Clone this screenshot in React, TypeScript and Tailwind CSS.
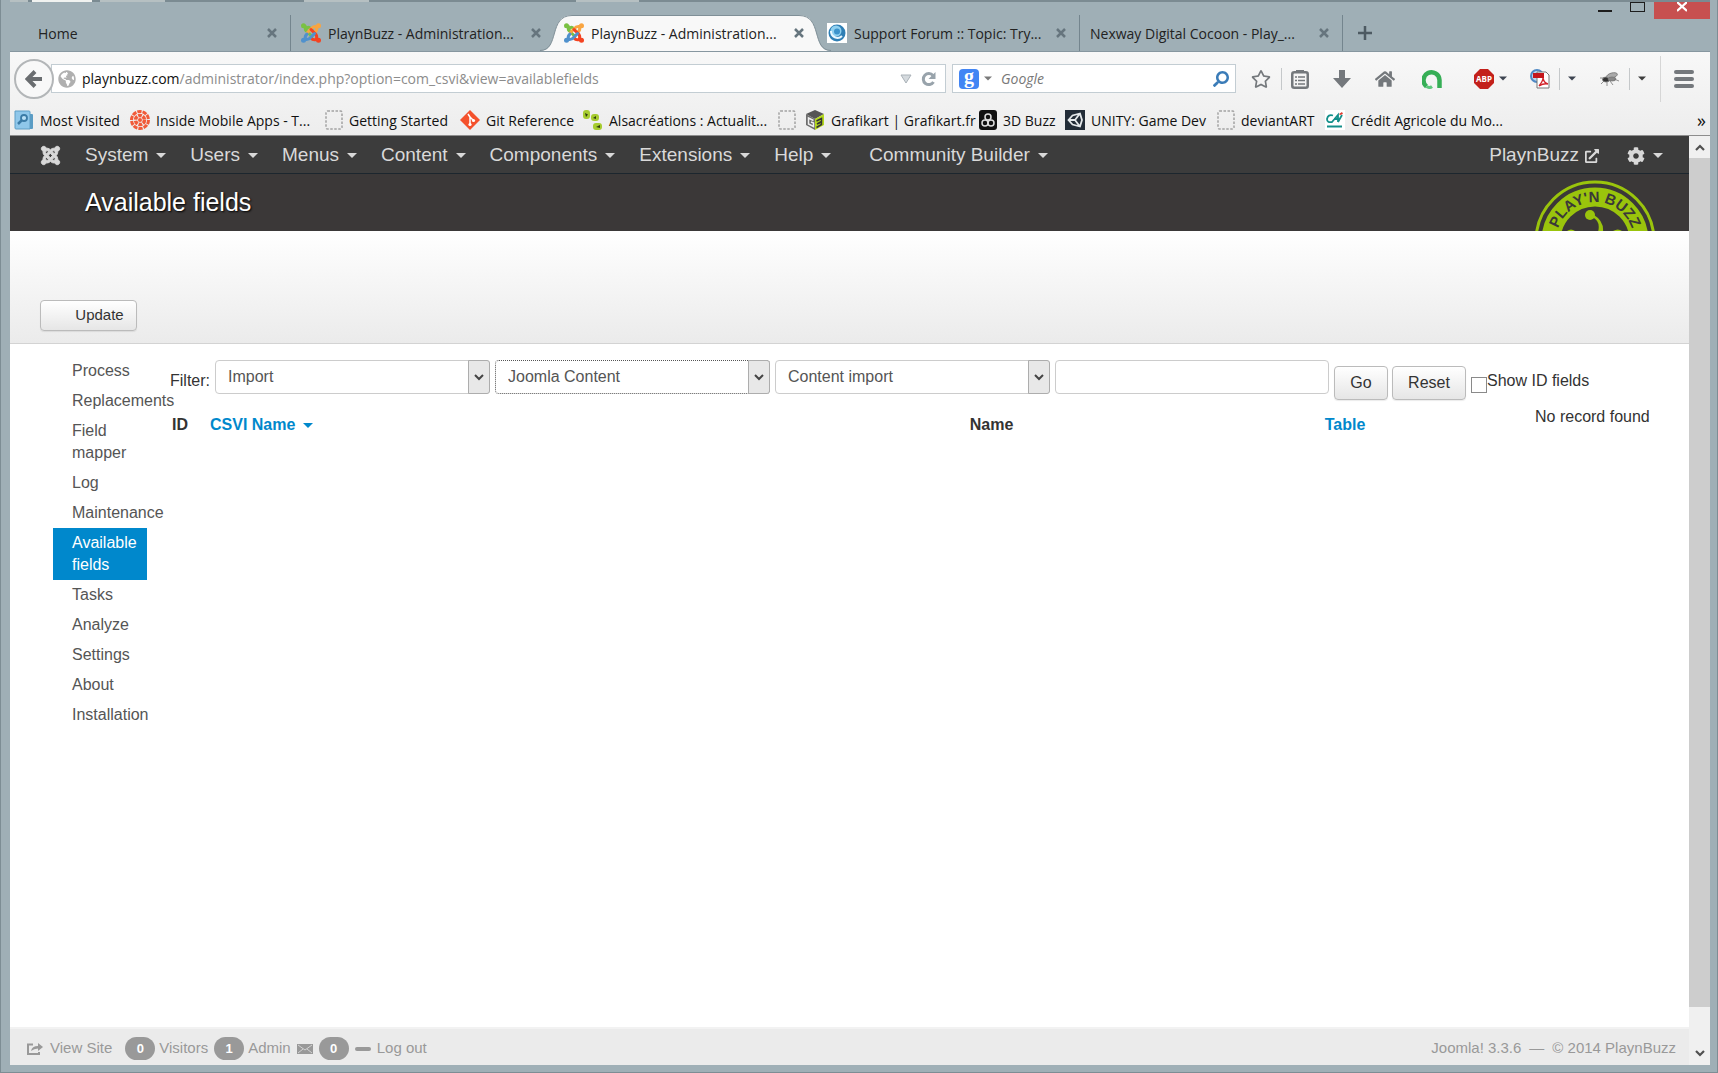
import { useState } from "react";
import { FaJoomla, FaArrowLeft, FaHome, FaGlobeAmericas, FaRegStar, FaSearch, FaExternalLinkAlt, FaCog } from "react-icons/fa";

const menuItems = ["System", "Users", "Menus", "Content", "Components", "Extensions", "Help"];

const sidebarItems = [
  "Process",
  "Replacements",
  "Field mapper",
  "Log",
  "Maintenance",
  "Available fields",
  "Tasks",
  "Analyze",
  "Settings",
  "About",
  "Installation",
];

const bookmarks = [
  { icon: "visited", label: "Most Visited", width: "w-[116px]" },
  { icon: "balls", label: "Inside Mobile Apps - T...", width: "w-[195px]" },
  { icon: "blank", label: "Getting Started", width: "w-[135px]" },
  { icon: "git", label: "Git Reference", width: "w-[123px]" },
  { icon: "leaf", label: "Alsacréations : Actualit...", width: "w-[195px]" },
  { icon: "blank", label: "", width: "w-[27px]" },
  { icon: "cube", label: "Grafikart | Grafikart.fr", width: "w-[174px]" },
  { icon: "buzz", label: "3D Buzz", width: "w-[86px]" },
  { icon: "unity", label: "UNITY: Game Dev", width: "w-[152px]" },
  { icon: "blank", label: "deviantART", width: "w-[108px]" },
  { icon: "credit", label: "Crédit Agricole du Mo...", width: "w-[200px]" },
];

function Caret({ className = "w-[10px]" }: { className?: string }) {
  return (
    <svg viewBox="0 0 10 5" className={`h-[5px] shrink-0 fill-current ${className}`}>
      <path d="M0 0h10L5 5z" />
    </svg>
  );
}

function JoomlaIcon() {
  return (
    <svg viewBox="0 0 20 20" className="size-5 shrink-0" fill="none" strokeWidth="3" strokeLinecap="round" strokeLinejoin="round">
      <path d="M2.5 3l2 .5Q3.5 7 6 8.500l5 5" stroke="#7ac143" />
      <path d="M5 7q1-4 4-2l2 2" stroke="#7ac143" />
      <path d="M17.500 3l-2 .5Q12 3 10.500 5.500l-4 4" stroke="#f9a541" />
      <path d="M15.500 4q1 3-1.500 5" stroke="#f9a541" />
      <path d="M17.500 17l-2-.5q1-4-1.500-6L10 6.500" stroke="#f44321" />
      <path d="M15 16.500q-3 1-5-1.500" stroke="#f44321" />
      <path d="M2.500 17l2-.5Q8 17 9.500 14.500l4-4" stroke="#5091cd" />
      <path d="M4.500 16q-1-3 1.500-5" stroke="#5091cd" />
      <g stroke="none">
        <circle cx="2.500" cy="2.800" r="2.500" fill="#7ac143" />
        <circle cx="17.500" cy="2.800" r="2.500" fill="#f9a541" />
        <circle cx="17.500" cy="17.200" r="2.500" fill="#f44321" />
        <circle cx="2.500" cy="17.200" r="2.500" fill="#5091cd" />
      </g>
    </svg>
  );
}

function ForumIcon() {
  return (
    <svg viewBox="0 0 20 20" className="size-5 shrink-0">
      <path fill="#fff" d="M0 0h20v20H0z" />
      <circle cx="10" cy="10" r="8.500" fill="#2f7fb5" />
      <circle cx="9" cy="8" r="5.500" fill="#8fd0f0" />
      <path d="M4 8a6.500 6.500 0 0 0 11 5" stroke="#e8f7ff" strokeWidth="2" fill="none" />
      <circle cx="10" cy="8.500" r="3" fill="#3b93cc" />
    </svg>
  );
}

function BookmarkIcon({ name }: { name: string }) {
  switch (name) {
    case "visited":
      return (
        <svg viewBox="0 0 20 20" className="size-5 shrink-0">
          <path d="M4 4h14a1 1 0 0 1 1 1v13a1 1 0 0 1-1 1H6z" fill="#5b9cc4" />
          <path d="M1 1h14a1 1 0 0 1 1 1v17H2a1 1 0 0 1-1-1z" fill="#8fc7ea" stroke="#5d9dc5" />
          <circle cx="10" cy="8" r="3" fill="#b9e0f6" stroke="#3b7ba6" strokeWidth="1.800" />
          <path d="M7.500 10.500L4 14" stroke="#3b7ba6" strokeWidth="2.500" />
        </svg>
      );
    case "balls":
      return (
        <svg viewBox="0 0 20 20" className="size-5 shrink-0">
          <circle cx="10" cy="10" r="8.500" fill="none" stroke="#f15a38" strokeWidth="3" strokeDasharray="4.300 1" />
          <circle cx="10" cy="10" r="4.500" fill="none" stroke="#f15a38" strokeWidth="3.500" strokeDasharray="3.700 1" />
          <circle cx="10" cy="10" r="2" fill="#f15a38" />
        </svg>
      );
    case "git":
      return (
        <svg viewBox="0 0 20 20" className="size-5 shrink-0">
          <path d="M10 0l10 10-10 10L0 10z" fill="#f4512c" />
          <path d="M8 4l2 3v8M10 7l4 4" stroke="#fff" strokeWidth="1.500" fill="none" />
          <circle cx="10" cy="14.500" r="1.600" fill="#fff" />
          <circle cx="13.500" cy="10.500" r="1.600" fill="#fff" />
        </svg>
      );
    case "leaf":
      return (
        <svg viewBox="0 0 20 20" className="size-5 shrink-0" fill="#a6cc2f">
          <rect x="0" y="0" width="7" height="9" rx="3" />
          <rect x="8" y="4" width="8" height="7" rx="3" />
          <rect x="10" y="13" width="9" height="7" rx="3" />
          <path d="M2 3l3 1.500L3 7zM10 8l3-2v3zM13 17l4-2v3z" fill="#2f3c10" />
        </svg>
      );
    case "cube":
      return (
        <svg viewBox="0 0 20 20" className="size-5 shrink-0">
          <path d="M10 0l9 4-9 5-9-5z" fill="#555" />
          <path d="M1 4l9 5v11l-9-5z" fill="#6d6d6d" />
          <path d="M19 4l-9 5v11l9-5z" fill="#b5d91c" />
          <path d="M8.500 10.500L3.500 8v6l5 2.500V13L6 12" stroke="#eee" strokeWidth="1.500" fill="none" />
          <path d="M11.500 11l5-2.500v3L12 14l4.500-2v2.500l-5 3" stroke="#333" strokeWidth="1.500" fill="none" />
        </svg>
      );
    case "buzz":
      return (
        <svg viewBox="0 0 18 20" className="h-5 w-[18px] shrink-0">
          <rect width="18" height="20" rx="3" fill="#111" />
          <g fill="none" stroke="#ddd" strokeWidth="1.500">
            <circle cx="9" cy="7" r="3" />
            <circle cx="6" cy="13" r="3" />
            <circle cx="12" cy="13" r="3" />
          </g>
        </svg>
      );
    case "unity":
      return (
        <svg viewBox="0 0 20 20" className="size-5 shrink-0">
          <path fill="#222c37" d="M0 0h20v20H0z" />
          <path d="M3.500 10l4-4.500L15 3.500l2 6.500-2 6.500-7.500-2zM4 10h6M10 10l4.500-6M10 10l4.500 6" fill="none" stroke="#e4e8ea" strokeWidth="1.800" />
        </svg>
      );
    case "credit":
      return (
        <svg viewBox="0 0 20 20" className="size-5 shrink-0">
          <path fill="#fff" d="M0 0h20v20H0z" />
          <path d="M8 5.500Q3 4 2 9q0 4 5 3l6-7v7M9 9h4M13 12l4-7" fill="none" stroke="#138f8a" strokeWidth="1.800" />
          <path d="M14 4l3-2 1 2-3 1z" fill="#e03a2e" />
          <path d="M2 16.500h15" stroke="#138f8a" strokeWidth="2" />
        </svg>
      );
    default:
      return (
        <svg viewBox="0 0 18 20" className="h-5 w-[18px] shrink-0">
          <rect x="1" y="1" width="16" height="18" rx="1.500" fill="none" stroke="#a3a3a3" strokeWidth="1.500" strokeDasharray="2.500 1.500" />
        </svg>
      );
  }
}

function TabShape() {
  return (
    <span className="absolute inset-y-0 -inset-x-[14px] flex">
      <svg viewBox="0 0 34 36" className="h-9 w-[34px] shrink-0">
        <path d="M0 36C20 36 8 0 32 0H34V36z" fill="#f8f8f8" />
        <path d="M0 35.500C20 35.500 8 .5 32 .5H34" fill="none" stroke="#7f8f97" />
      </svg>
      <span className="flex-1 border-t border-[#7f8f97] bg-[#f8f8f8]" />
      <svg viewBox="0 0 34 36" className="h-9 w-[34px] shrink-0 -scale-x-100">
        <path d="M0 36C20 36 8 0 32 0H34V36z" fill="#f8f8f8" />
        <path d="M0 35.500C20 35.500 8 .5 32 .5H34" fill="none" stroke="#7f8f97" />
      </svg>
    </span>
  );
}

type TabProps = {
  label: string;
  icon?: "joomla" | "forum";
  active?: boolean;
  divider?: boolean;
};

function Tab({ label, icon, active, divider }: TabProps) {
  return (
    <div className={`relative flex h-9 w-[263px] shrink-0 items-center ${active ? "z-10" : ""} ${divider ? "border-r border-[#74858e]" : ""}`}>
      {active && <TabShape />}
      <div className="relative flex min-w-0 flex-1 items-center gap-[7px] px-[10px]">
        {icon === "joomla" && <JoomlaIcon />}
        {icon === "forum" && <ForumIcon />}
        <span className="flex-1 whitespace-nowrap">{label}</span>
        <button aria-label="Close tab" className="flex size-4 items-center justify-center text-[#66757e]">
          <svg viewBox="0 0 10 10" className="size-[10px]">
            <path d="M1 1l8 8M9 1L1 9" stroke="currentColor" strokeWidth="2.500" />
          </svg>
        </button>
      </div>
    </div>
  );
}

// slivers of the windows behind, along the top edge
function TopEdge() {
  return (
    <div className="flex h-[2px] overflow-hidden bg-[#7b8b92]">
      <span className="w-[18px] bg-[#b6c0c2]" />
      <span className="ml-1 w-[60px] bg-[#f0f2f0]" />
      <span className="ml-2 w-[65px] bg-[#b6c0c2]" />
      <span className="ml-[139px] w-[65px] bg-[#b6c0c2]" />
      <span className="ml-[207px] w-[63px] bg-[#b6c0c2]" />
    </div>
  );
}

function TitleBar() {
  return (
    <header className="flex h-[49px] items-end text-[14px] text-[#222]">
      <div className="flex min-w-0 flex-1">
        <div className="pl-[18px]">
          <Tab label="Home" divider />
        </div>
        <Tab label="PlaynBuzz - Administration..." icon="joomla" />
        <Tab label="PlaynBuzz - Administration..." icon="joomla" active />
        <Tab label="Support Forum :: Topic: Try..." icon="forum" divider />
        <Tab label="Nexway Digital Cocoon - Play_..." divider />
        <button aria-label="New tab" className="flex h-9 w-11 items-center justify-center text-[#4d5a62]">
          <svg viewBox="0 0 14 14" className="size-[14px]">
            <path d="M7 0v14M0 7h14" stroke="currentColor" strokeWidth="2.500" />
          </svg>
        </button>
      </div>
      <div className="flex self-start">
        <button aria-label="Minimize" className="flex h-[10px] w-9 items-end justify-center">
          <span className="h-[2px] w-[14px] bg-[#1d1d1d]" />
        </button>
        <button aria-label="Maximize" className="flex h-[10px] w-7 items-end justify-center">
          <span className="h-[10px] w-[15px] border border-[#1d1d1d]" />
        </button>
        <button aria-label="Close" className="ml-[3px] flex h-[17px] w-14 justify-center bg-[#c75050] text-white">
          <svg viewBox="0 0 10 10" className="size-[10px]">
            <path d="M0 0l10 9M10 0L0 9" stroke="currentColor" strokeWidth="2.200" />
          </svg>
        </button>
      </div>
    </header>
  );
}

function ToolbarDivider() {
  return <span className="h-[22px] w-px shrink-0 bg-[#c5c8ca]" />;
}

function AddressBar() {
  return (
    <div className="flex h-[53px] items-center pr-4 pl-1 text-[14px]">
      <button aria-label="Back" className="relative flex size-10 shrink-0 items-center justify-center rounded-full border-2 border-[#b3b6b8] bg-[#f8f8f8] text-[#6a6d70]">
        <svg viewBox="0 0 18 18" className="size-[18px]">
          <path d="M10 1.500L2.500 9l7.500 7.500M3 9h14" fill="none" stroke="currentColor" strokeWidth="4" />
        </svg>
      </button>
      <div className="-ml-[3px] flex h-[29px] min-w-0 flex-1 items-center border border-[#c3cdd3] bg-white pr-2 pl-[6px]">
        <FaGlobeAmericas className="size-[18px] shrink-0 text-[#b0b0b0]" />
        <div className="flex-1 pl-[6px] text-[#8c8c8c]">
          <span className="text-[#111]">playnbuzz.com</span>/administrator/index.php?option=com_csvi&amp;view=availablefields
        </div>
        <svg viewBox="0 0 12 10" className="mr-[9px] h-[10px] w-3">
          <path d="M1 1h10L6 9z" fill="#d5dade" stroke="#aab2b8" />
        </svg>
        <button aria-label="Reload" className="text-[#98a3ab]">
          <svg viewBox="0 0 16 16" className="size-4">
            <path d="M12 4.500A5.500 5.500 0 1 0 12.500 11" fill="none" stroke="currentColor" strokeWidth="3" />
            <path d="M14.500 1v7h-7z" fill="currentColor" />
          </svg>
        </button>
      </div>
      <div className="ml-[6px] flex h-[29px] w-[284px] shrink-0 items-center border border-[#c3cdd3] bg-white px-[6px]">
        <span className="flex size-5 items-center justify-center rounded-sm bg-[#4285f4] pb-[5px] font-['Liberation_Serif',serif] text-[20px] leading-5 font-bold text-white">g</span>
        <Caret className="mx-[5px] w-2 text-[#7a7a7a]" />
        <input aria-label="Search" placeholder="Google" className="min-w-0 flex-1 pl-1 outline-none placeholder:text-[#777] placeholder:italic" />
        <FaSearch className="size-4 -scale-x-100 text-[#3b7cb8]" />
      </div>
      <div className="flex shrink-0 items-center text-[#74787c]">
        <FaRegStar className="ml-[15px] size-5" />
        <span className="ml-[10px] flex"><ToolbarDivider /></span>
        <svg viewBox="0 0 18 20" className="ml-[9px] h-5 w-[18px]">
          <rect x="1.250" y="3.250" width="15.500" height="15.500" rx="2" fill="none" stroke="currentColor" strokeWidth="2.500" />
          <path d="M5 1h8v3H5z" fill="currentColor" />
          <path d="M4 8h2M7 8h7M4 11.500h2M7 11.500h7M4 15h2M7 15h7" stroke="currentColor" strokeWidth="1.500" />
        </svg>
        <svg viewBox="0 0 18 20" className="ml-6 h-5 w-[18px]">
          <path d="M6 1h6v8h6l-9 10L0 9h6z" fill="currentColor" />
        </svg>
        <FaHome className="ml-6 size-5" />
        <svg viewBox="0 0 20 20" className="ml-[27px] size-5">
          <path d="M4.500 17.500A8 8 0 1 1 17.500 11v8" fill="none" stroke="#36ae56" strokeWidth="4.500" />
          <path d="M4.500 17.500q3 2 5.500 0" fill="none" stroke="#5cc77c" strokeWidth="3" />
        </svg>
        <svg viewBox="0 0 20 20" className="ml-8 size-5">
          <path d="M6 0h8l6 6v8l-6 6H6l-6-6V6z" fill="#c3201a" />
          <text x="10" y="13" textAnchor="middle" fontSize="8" fontWeight="700" fill="#fff">ABP</text>
        </svg>
        <Caret className="ml-[5px] w-2 text-[#3d4450]" />
        <svg viewBox="0 0 20 20" className="ml-[23px] size-5">
          <circle cx="7" cy="7" r="6" fill="#bcd7ef" stroke="#4f88c4" strokeWidth="2" />
          <path d="M7 3h9l3 3v13H7z" fill="#fff" stroke="#777" />
          <path d="M3 4h11v5H3z" fill="#c4161c" />
          <path d="M9 17q4-5 4-8 1 5 5 6-4-1-9 2z" fill="none" stroke="#d2232a" strokeWidth="1.300" />
        </svg>
        <span className="ml-[9px] flex"><ToolbarDivider /></span>
        <Caret className="ml-2 w-2 text-[#3d4450]" />
        <svg viewBox="0 0 20 18" className="ml-6 h-[18px] w-5" stroke="#777" strokeWidth=".8" fill="none">
          <ellipse cx="6" cy="9.500" rx="3.500" ry="2.500" fill="#333" />
          <ellipse cx="12" cy="5.500" rx="5.500" ry="2.500" fill="#aaa" transform="rotate(-15 12 5.500)" />
          <ellipse cx="12" cy="9" rx="4" ry="2" fill="#888" />
          <path d="M4 11l-3 3M7 12v4M10 11l3 4M14 9l5 2M4 8L0 8" />
        </svg>
        <span className="ml-[9px] flex"><ToolbarDivider /></span>
        <Caret className="ml-2 w-2 text-[#3d3d3d]" />
        <span className="ml-[14px] h-[46px] w-px bg-[#d6d6d6]" />
        <button aria-label="Open menu" className="ml-[13px] flex w-5 flex-col gap-[3px]">
          <span className="h-1 rounded-sm bg-[#74787c]" />
          <span className="h-1 rounded-sm bg-[#74787c]" />
          <span className="h-1 rounded-sm bg-[#74787c]" />
        </button>
      </div>
    </div>
  );
}

function BookmarksBar() {
  return (
    <nav className="flex h-[31px] items-center border-b border-[#8d8d8d] px-1 text-[14px] text-[#111]">
      {bookmarks.map((b, i) => (
        <a key={i} href="#" className={`flex shrink-0 items-center gap-[6px] whitespace-nowrap ${b.width}`}>
          <BookmarkIcon name={b.icon} />
          {b.label}
        </a>
      ))}
      <button aria-label="More bookmarks" className="ml-auto text-[18px] leading-5">»</button>
    </nav>
  );
}

function AdminNav() {
  return (
    <nav className="flex h-[38px] items-center border-b border-[#1c262e] bg-[#3c3c3c] pt-[2px] pr-[26px] pl-[30px] text-[19px] text-[#d9d9d9]">
      <a href="#" aria-label="Joomla" className="mr-6">
        <FaJoomla className="size-[21px] stroke-current [stroke-width:24]" />
      </a>
      <div className="flex flex-1 gap-6">
        {menuItems.map((m) => (
          <a key={m} href="#" className="flex items-center gap-2">
            {m}
            <Caret />
          </a>
        ))}
        <a href="#" className="ml-[14px] flex items-center gap-2">
          Community Builder
          <Caret />
        </a>
      </div>
      <a href="#" className="flex items-center gap-[6px]">
        PlaynBuzz
        <FaExternalLinkAlt className="size-[14px]" />
      </a>
      <button aria-label="Settings" className="ml-7 flex items-center gap-2">
        <FaCog className="size-[18px]" />
        <Caret />
      </button>
    </nav>
  );
}

function BrandLogo() {
  return (
    <svg viewBox="0 0 122 51" className="h-[51px] w-[122px] self-end">
      <circle cx="61" cy="61" r="59" fill="none" stroke="#9ac40c" strokeWidth="3" />
      <circle cx="61" cy="61" r="44" fill="none" stroke="#9ac40c" strokeWidth="19" />
      <path id="ring" d="M22 61a39 39 0 0 1 78 0" fill="none" />
      <text fontSize="15" fontWeight="700" fill="#3b3838">
        <textPath href="#ring" startOffset="50%" textAnchor="middle">PLAY'N BUZZ</textPath>
      </text>
      <circle cx="56" cy="35" r="5" fill="#9ac40c" />
      <path d="M58 37q9 4 6 15h5q1-11-9-17z" fill="#9ac40c" />
      <path d="M33 51q4-3 8 0zM79 51q5-3 9 0z" fill="#9ac40c" />
    </svg>
  );
}

function FilterSelect({ label, value, focused }: { label: string; value: string; focused?: boolean }) {
  return (
    <div className="relative w-[275px]">
      <select
        aria-label={label}
        className={`h-[34px] w-full appearance-none rounded-[4px] border bg-white pl-3 text-[#555] outline-none ${focused ? "border-dotted border-[#555]" : "border-[#ccc]"}`}
      >
        <option>{value}</option>
      </select>
      <span className="pointer-events-none absolute inset-y-0 right-0 flex w-[22px] items-center justify-center rounded-r-[3px] border border-[#adadad] bg-[#e8e8e8]">
        <svg viewBox="0 0 10 7" className="h-[7px] w-[10px]">
          <path d="M1 1l4 4 4-4" fill="none" stroke="#444" strokeWidth="2" />
        </svg>
      </span>
    </div>
  );
}

const buttonClass = "rounded-[4px] border border-[#bbb] bg-linear-to-b from-white to-[#e6e6e6] text-[#333] shadow-[0_1px_1px_rgba(0,0,0,0.08)]";

function Filters() {
  const [filter, setFilter] = useState("");
  const [showIds, setShowIds] = useState(false);

  return (
    <form className="flex items-start gap-[5px]">
      <label htmlFor="filter" className="pt-[9px] leading-6">Filter:</label>
      <FilterSelect label="Action" value="Import" />
      <FilterSelect label="Component" value="Joomla Content" focused />
      <FilterSelect label="Operation" value="Content import" />
      <input
        id="filter"
        value={filter}
        onChange={(e) => setFilter(e.target.value)}
        className="h-[34px] w-[274px] rounded-[4px] border border-[#ccc] px-3 outline-none"
      />
      <div className="flex gap-1 pt-[6px]">
        <button type="button" className={`h-[34px] w-[54px] ${buttonClass}`}>Go</button>
        <button type="button" className={`h-[34px] w-[74px] ${buttonClass}`}>Reset</button>
      </div>
      <div className="flex pt-[9px]">
        <input
          id="show-ids"
          type="checkbox"
          checked={showIds}
          onChange={(e) => setShowIds(e.target.checked)}
          className="mt-2 size-4 appearance-none border border-[#8a8a8a] bg-white checked:bg-[#08c]"
        />
        <label htmlFor="show-ids" className="leading-6 whitespace-nowrap">Show ID fields</label>
      </div>
    </form>
  );
}

function FieldsTable() {
  return (
    <div className="flex">
      <table className="mt-2 flex-1 table-fixed font-bold">
        <thead>
          <tr className="leading-[34px]">
            <th className="w-10 pl-[2px] text-left">ID</th>
            <th className="w-[606px] text-left">
              <a href="#" className="inline-flex items-center gap-2 text-[#08c]">
                CSVI Name
                <Caret />
              </a>
            </th>
            <th className="text-center">Name</th>
            <th className="w-[356px] text-center">
              <a href="#" className="text-[#08c]">Table</a>
            </th>
          </tr>
        </thead>
      </table>
      <p className="mt-[5px] w-[130px] shrink-0 pl-3 leading-6 whitespace-nowrap">No record found</p>
    </div>
  );
}

function Badge({ count, className }: { count: number; className: string }) {
  return (
    <span className={`w-[30px] rounded-full bg-[#999] text-center text-[13px] leading-[23px] font-bold text-white ${className}`}>
      {count}
    </span>
  );
}

function StatusBar() {
  return (
    <footer className="flex h-[38px] items-center border-t-2 border-[#f2f2f2] bg-[#ebebeb] pt-[3px] pr-[13px] pl-[17px] text-[15px] text-[#999]">
      <a href="#" className="flex items-center gap-[7px]">
        <svg viewBox="0 0 16 12" className="h-3 w-4">
          <path d="M6 1.500H1V11h11V9" fill="none" stroke="currentColor" strokeWidth="2" />
          <path d="M4 8q1-5 7-5V0l5 4-5 4V5.500Q7 5.500 4 8z" fill="currentColor" />
        </svg>
        View Site
      </a>
      <Badge count={0} className="ml-[13px]" />
      <span className="ml-1">Visitors</span>
      <Badge count={1} className="ml-[6px]" />
      <span className="ml-1">Admin</span>
      <svg viewBox="0 0 16 10" className="ml-[6px] h-[10px] w-4">
        <path fill="currentColor" d="M0 0h16v10H0z" />
        <path d="M1 1l7 5 7-5M1 9l5-4M15 9l-5-4" fill="none" stroke="#ebebeb" strokeWidth=".7" />
      </svg>
      <Badge count={0} className="ml-[6px]" />
      <span className="ml-[6px] h-1 w-4 rounded-sm bg-[#999]" />
      <a href="#" className="ml-[6px]">Log out</a>
      <span className="ml-auto flex gap-2 whitespace-nowrap">
        <span>Joomla! 3.3.6</span>
        <span>—</span>
        <span>© 2014 PlaynBuzz</span>
      </span>
    </footer>
  );
}

function Scrollbar() {
  return (
    <div className="flex w-[21px] shrink-0 flex-col bg-[#f0f0f0] text-[#505050]">
      <button aria-label="Scroll up" className="flex h-[22px] items-center justify-center">
        <svg viewBox="0 0 10 7" className="h-[7px] w-[10px]">
          <path d="M1 6l4-4 4 4" fill="none" stroke="currentColor" strokeWidth="2.200" />
        </svg>
      </button>
      <div className="flex-1 bg-[#cdcdcd]" />
      <button aria-label="Scroll down" className="flex h-[58px] items-end justify-center pb-2">
        <svg viewBox="0 0 10 7" className="h-[7px] w-[10px]">
          <path d="M1 1l4 4 4-4" fill="none" stroke="currentColor" strokeWidth="2.200" />
        </svg>
      </button>
    </div>
  );
}

export default function App() {
  return (
    <div className="flex min-h-screen flex-col border-x border-b border-[#7d8d94] bg-[#9fafb6] pr-[7px] pb-[7px] pl-[9px] font-['Open_Sans',sans-serif]">
      <TopEdge />
      <TitleBar />
      <div className="border-t border-[#8797a0] bg-linear-to-b from-[#f8f8f8] to-[#ededed]">
        <AddressBar />
        <BookmarksBar />
      </div>
      <div className="flex flex-1 font-['Liberation_Sans',Arial,sans-serif] text-[16px]">
        <div className="flex min-w-0 flex-1 flex-col bg-white text-[#333]">
          <AdminNav />
          <div className="flex h-[57px] items-center justify-between bg-[#3b3838] pr-[33px] pl-[75px]">
            <h1 className="text-[25px] text-white [text-shadow:1px_1px_2px_#000]">Available fields</h1>
            <BrandLogo />
          </div>
          <div className="flex h-[113px] items-end border-b border-[#d3d3d3] bg-linear-to-b from-white to-[#ebebeb] pb-3 pl-[30px]">
            <button className={`h-[31px] w-[97px] pl-[22px] text-[15px] ${buttonClass}`}>Update</button>
          </div>
          <main className="flex flex-1 items-start pt-3 pl-[43px]">
            <ul className="w-[94px] shrink-0 text-[#555]">
              {sidebarItems.map((item) => (
                <li key={item}>
                  <a
                    href="#"
                    className={`block py-1 pr-2 pl-[19px] leading-[22px] ${item === "Available fields" ? "bg-[#08c] text-white" : ""}`}
                  >
                    {item}
                  </a>
                </li>
              ))}
            </ul>
            <div className="min-w-0 flex-1 pt-1 pr-9 pl-[23px]">
              <Filters />
              <FieldsTable />
            </div>
          </main>
          <StatusBar />
        </div>
        <Scrollbar />
      </div>
    </div>
  );
}
